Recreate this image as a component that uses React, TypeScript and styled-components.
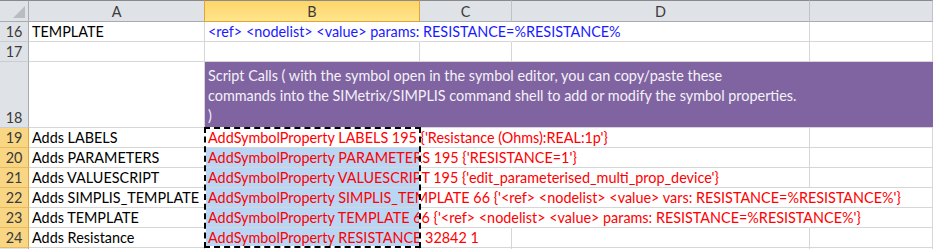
import React from "react";
import styled, { createGlobalStyle, css } from "styled-components";

const Global = createGlobalStyle`
  html, body { margin: 0; padding: 0; background: #ffffff; }
  body { font-family: Lato, "Liberation Sans", sans-serif; }
`;

const FONT = `Lato, "Liberation Sans", sans-serif`;

const Sheet = styled.div`
  display: grid;
  grid-template-columns: 29px 176px 215px 92px 298px 1fr;
  grid-template-rows: 22px 20px 20px 66px repeat(6, 20px) 20px;
  width: 933px;
  height: 249px;
  overflow: hidden;
  font-family: ${FONT};
  font-size: 14.4px;
  background: #fff;
`;

const Corner = styled.div`
  position: relative;
  box-sizing: border-box;
  background: #dfe2e6;
  border-top: 1px solid #8a8a8a;
  border-right: 1px solid #a8abb0;
  border-bottom: 1px solid #a8abb0;
  &::after {
    content: "";
    position: absolute;
    right: 3px;
    bottom: 3px;
    width: 0;
    height: 0;
    border-left: 12px solid transparent;
    border-bottom: 12px solid #b9bcc1;
  }
`;

const ColHeader = styled.div<{ $active?: boolean }>`
  box-sizing: border-box;
  display: flex;
  align-items: center;
  justify-content: center;
  padding-top: 1px;
  color: #3b3b3b;
  border-top: 1px solid #8a8a8a;
  border-bottom: 1px solid #a8abb0;
  border-right: 1px solid #bfc2c6;
  background: #dfe2e6;
  ${(p) =>
    p.$active &&
    css`
      background: linear-gradient(#fdd56a, #ffe58b);
      border-bottom: 1px solid #e2a43a;
      border-right: 1px solid #e2a43a;
      margin-left: -1px;
      border-left: 1px solid #e2a43a;
    `}
`;

const RowHeader = styled.div<{ $active?: boolean }>`
  box-sizing: border-box;
  display: flex;
  align-items: flex-end;
  justify-content: center;
  color: #3b3b3b;
  background: #dfe2e6;
  border-right: 1px solid #a8abb0;
  border-bottom: 1px solid #c9ccd0;
  line-height: 19px;
  ${(p) =>
    p.$active &&
    css`
      background: #f8d683;
      border-right: 1px solid #e2a43a;
      border-bottom: 1px solid #e8bc5a;
    `}
`;

const Cell = styled.div<{
  $bg?: string;
  $color?: string;
  $noRight?: boolean;
}>`
  position: relative;
  box-sizing: border-box;
  display: flex;
  align-items: flex-end;
  padding: 0 0 0 3px;
  min-width: 0;
  white-space: nowrap;
  overflow: visible;
  color: ${(p) => p.$color || "#000"};
  background: ${(p) => p.$bg || "#fff"};
  border-bottom: 1px solid #d6d6d6;
  border-right: 1px solid ${(p) => (p.$noRight ? "transparent" : "#d6d6d6")};
`;

const CellText = styled.span`
  position: relative;
  z-index: 1;
  line-height: 19px;
`;

const BannerCell = styled.div`
  grid-column: span 3;
  box-sizing: border-box;
  display: flex;
  align-items: flex-end;
  padding: 0 0 1px 3px;
  background: #8064a2;
  color: #f4f2f7;
  border-bottom: 1px solid #d6d6d6;
  white-space: nowrap;
`;

const BannerFill = styled.div`
  box-sizing: border-box;
  background: #8064a2;
  border-bottom: 1px solid #d6d6d6;
`;

const BannerText = styled.div`
  line-height: 20px;
`;

/* marching-ants copy border lying over the selected range B19:B24 */
const Marquee = styled.div<{ $rows: number }>`
  position: absolute;
  left: -1px;
  top: -1px;
  width: 217px;
  height: ${(p) => p.$rows * 20 + 1}px;
  box-sizing: border-box;
  border: 2px solid #fff;
  outline: 2px dashed #000;
  outline-offset: -2px;
  z-index: 3;
  pointer-events: none;
`;

type Row = {
  n: number;
  a: string;
  b: string;
  cover: number;
  sel?: boolean;
  first?: boolean;
};

const rows: Row[] = [
  {
    n: 19,
    a: "Adds LABELS",
    b: "AddSymbolProperty LABELS 195 {'Resistance (Ohms):REAL:1p'}",
    cover: 2,
    first: true,
  },
  {
    n: 20,
    a: "Adds PARAMETERS",
    b: "AddSymbolProperty PARAMETERS 195 {'RESISTANCE=1'}",
    cover: 2,
    sel: true,
  },
  {
    n: 21,
    a: "Adds VALUESCRIPT",
    b: "AddSymbolProperty VALUESCRIPT 195 {'edit_parameterised_multi_prop_device'}",
    cover: 2,
    sel: true,
  },
  {
    n: 22,
    a: "Adds SIMPLIS_TEMPLATE",
    b: "AddSymbolProperty SIMPLIS_TEMPLATE 66 {'<ref> <nodelist> <value> vars: RESISTANCE=%RESISTANCE%'}",
    cover: 3,
    sel: true,
  },
  {
    n: 23,
    a: "Adds TEMPLATE",
    b: "AddSymbolProperty TEMPLATE 66 {'<ref> <nodelist> <value> params: RESISTANCE=%RESISTANCE%'}",
    cover: 3,
    sel: true,
  },
  {
    n: 24,
    a: "Adds Resistance",
    b: "AddSymbolProperty RESISTANCE 32842 1",
    cover: 1,
    sel: true,
  },
];

function DataRow({ r }: { r: Row }) {
  return (
    <>
      <RowHeader $active>{r.n}</RowHeader>
      <Cell>
        <CellText>{r.a}</CellText>
      </Cell>
      <Cell $color="#ff0000" $bg={r.sel ? "#b9d6f4" : "#fff"} $noRight={r.cover >= 1}>
        {r.first && <Marquee $rows={rows.length} />}
        <CellText>{r.b}</CellText>
      </Cell>
      <Cell $noRight={r.cover >= 2} />
      <Cell $noRight={r.cover >= 3} />
      <Cell />
    </>
  );
}

export default function App() {
  return (
    <>
      <Global />
      <Sheet>
        <Corner />
        <ColHeader>A</ColHeader>
        <ColHeader $active>B</ColHeader>
        <ColHeader>C</ColHeader>
        <ColHeader>D</ColHeader>
        <ColHeader />

        <RowHeader>16</RowHeader>
        <Cell>
          <CellText>TEMPLATE</CellText>
        </Cell>
        <Cell $color="#1a1aff" $noRight>
          <CellText>&lt;ref&gt; &lt;nodelist&gt; &lt;value&gt; params: RESISTANCE=%RESISTANCE%</CellText>
        </Cell>
        <Cell $noRight />
        <Cell />
        <Cell />

        <RowHeader>17</RowHeader>
        <Cell />
        <Cell />
        <Cell />
        <Cell />
        <Cell />

        <RowHeader>18</RowHeader>
        <Cell />
        <BannerCell>
          <BannerText>
            Script Calls ( with the symbol open in the symbol editor, you can copy/paste these
            <br />
            commands into the SIMetrix/SIMPLIS command shell to add or modify the symbol properties.
            <br />)
          </BannerText>
        </BannerCell>
        <BannerFill />

        {rows.map((r) => (
          <DataRow key={r.n} r={r} />
        ))}

        <RowHeader />
        <Cell />
        <Cell />
        <Cell />
        <Cell />
        <Cell />
      </Sheet>
    </>
  );
}
